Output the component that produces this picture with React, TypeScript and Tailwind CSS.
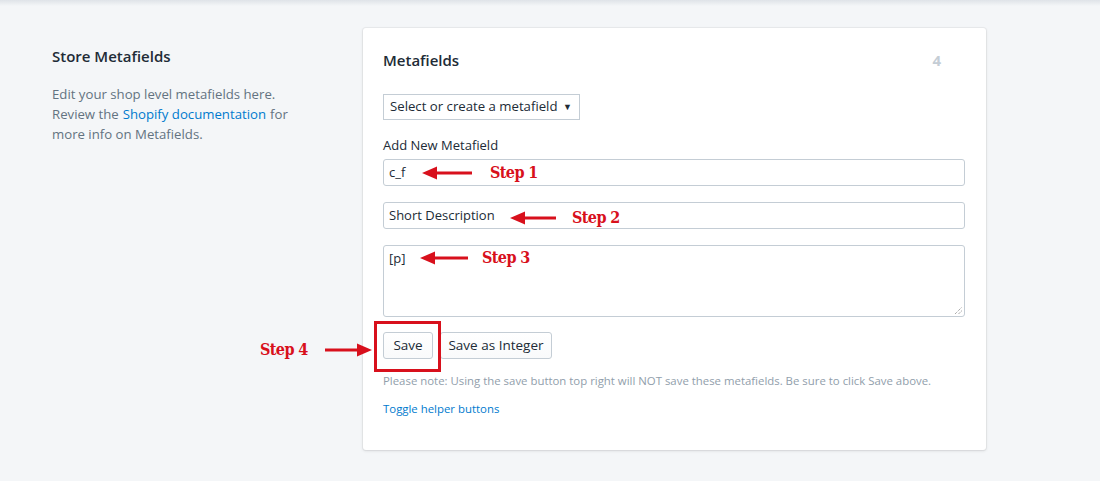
import React from "react";

const ui = { fontFamily: '"Open Sans", "Noto Sans", Arial, sans-serif' };
const slab = { fontFamily: '"DejaVu Serif", "Liberation Serif", serif', fontStretch: "condensed" as const };

function ArrowLeft({ w }: { w: number }) {
  return (
    <svg width={w} height="14" viewBox={`0 0 ${w} 14`}>
      <polygon points={`0,7 15,0.5 15,13.5`} fill="#d8101c" />
      <rect x="12" y="5.5" width={w - 12} height="3" fill="#d8101c" />
    </svg>
  );
}
function ArrowRight({ w }: { w: number }) {
  return (
    <svg width={w} height="14" viewBox={`0 0 ${w} 14`}>
      <rect x="0" y="5.5" width={w - 12} height="3" fill="#d8101c" />
      <polygon points={`${w},7 ${w - 15},0.5 ${w - 15},13.5`} fill="#d8101c" />
    </svg>
  );
}

function Step({ text }: { text: string }) {
  return (
    <span className="text-[16px] font-bold text-[#d8101c] leading-none tracking-[-0.6px]" style={slab}>
      {text}
    </span>
  );
}

export default function App() {
  return (
    <div className="relative w-[1100px] h-[481px] bg-[#f4f6f8] overflow-hidden" style={ui}>
      <div className="absolute top-0 left-0 right-0 h-[6px] bg-gradient-to-b from-[#dfe3e8] to-transparent" />
      <div className="flex pt-[28px] pl-[52px]">
        <div className="w-[311px] pt-[18px]">
          <h2 className="text-[15px] leading-[20px] font-semibold text-[#212b36]">Store Metafields</h2>
          <div className="mt-[18px] text-[13.2px] leading-[20px] text-[#637381]">
            <div>Edit your shop level metafields here.</div>
            <div className="flex gap-[4px]">
              <span>Review the</span>
              <a className="text-[#007ace]">Shopify documentation</a>
              <span>for</span>
            </div>
            <div>more info on Metafields.</div>
          </div>
        </div>
        <div className="relative w-[623px] h-[422px] bg-white rounded-[3px] shadow-[0_0_0_1px_rgba(63,63,68,0.05),0_1px_3px_0_rgba(63,63,68,0.15)] pt-[20px] pl-[20px] pr-[21px]">
          <div className="flex items-center justify-between h-[24px]">
            <h3 className="text-[15px] font-semibold text-[#212b36]">Metafields</h3>
            <span className="mr-[24px] text-[15px] font-bold text-[#c4cdd5]">4</span>
          </div>
          <div className="mt-[22px] inline-flex items-center h-[26px] w-[197px] border border-[#c4cdd5] bg-white px-[6px] text-[13.2px] text-[#212b36]">
            <span className="flex-1">Select or create a metafield</span>
            <span className="text-[9px] mr-[1px]">▼</span>
          </div>
          <div className="mt-[15px] text-[13px] leading-[20px] text-[#212b36]">Add New Metafield</div>
          <div className="mt-[4px] h-[27px] border border-[#c4cdd5] rounded-[3px] px-[5px] flex items-center text-[13px] text-[#212b36]">c_f</div>
          <div className="mt-[16px] h-[27px] border border-[#c4cdd5] rounded-[3px] px-[5px] flex items-center text-[13px] text-[#212b36]">Short Description</div>
          <div className="relative mt-[16px] h-[72px] border border-[#c4cdd5] rounded-[3px] px-[5px] pt-[3px] text-[13px] text-[#212b36]">
            [p]
            <svg className="absolute right-[1px] bottom-[1px]" width="9" height="9" viewBox="0 0 9 9">
              <line x1="1" y1="8" x2="8" y2="1" stroke="#888" strokeWidth="1" strokeDasharray="1 1" />
              <line x1="4.5" y1="8" x2="8" y2="4.5" stroke="#888" strokeWidth="1" strokeDasharray="1 1" />
            </svg>
          </div>
          <div className="mt-[15px] flex gap-[7px]">
            <button className="h-[27px] w-[50px] border border-[#c4cdd5] rounded-[3px] bg-gradient-to-b from-white to-[#f9fafb] text-[13.5px] text-[#212b36]">Save</button>
            <button className="h-[27px] w-[112px] border border-[#c4cdd5] rounded-[3px] bg-gradient-to-b from-white to-[#f9fafb] text-[13.5px] text-[#212b36]">Save as Integer</button>
          </div>
          <p className="mt-[14px] text-[11.4px] leading-[16px] text-[#919eab]">
            Please note: Using the save button top right will NOT save these metafields. Be sure to click Save above.
          </p>
          <p className="mt-[12px] text-[11.4px] leading-[16px] text-[#007ace]">Toggle helper buttons</p>

          {/* annotations */}
          <div className="absolute left-[59px] top-[137px] flex items-center gap-[18px]">
            <ArrowLeft w={50} />
            <Step text="Step 1" />
          </div>
          <div className="absolute left-[147px] top-[182px] flex items-center gap-[16px]">
            <ArrowLeft w={46} />
            <Step text="Step 2" />
          </div>
          <div className="absolute left-[57px] top-[222px] flex items-center gap-[14px]">
            <ArrowLeft w={48} />
            <Step text="Step 3" />
          </div>
          <div className="absolute left-[11px] top-[293px] w-[67px] h-[51px] border-[3px] border-[#d8101c]" />
        </div>
      </div>
      <div className="absolute left-[260px] top-[342px] flex items-center gap-[17px]">
        <Step text="Step 4" />
        <ArrowRight w={47} />
      </div>
    </div>
  );
}
